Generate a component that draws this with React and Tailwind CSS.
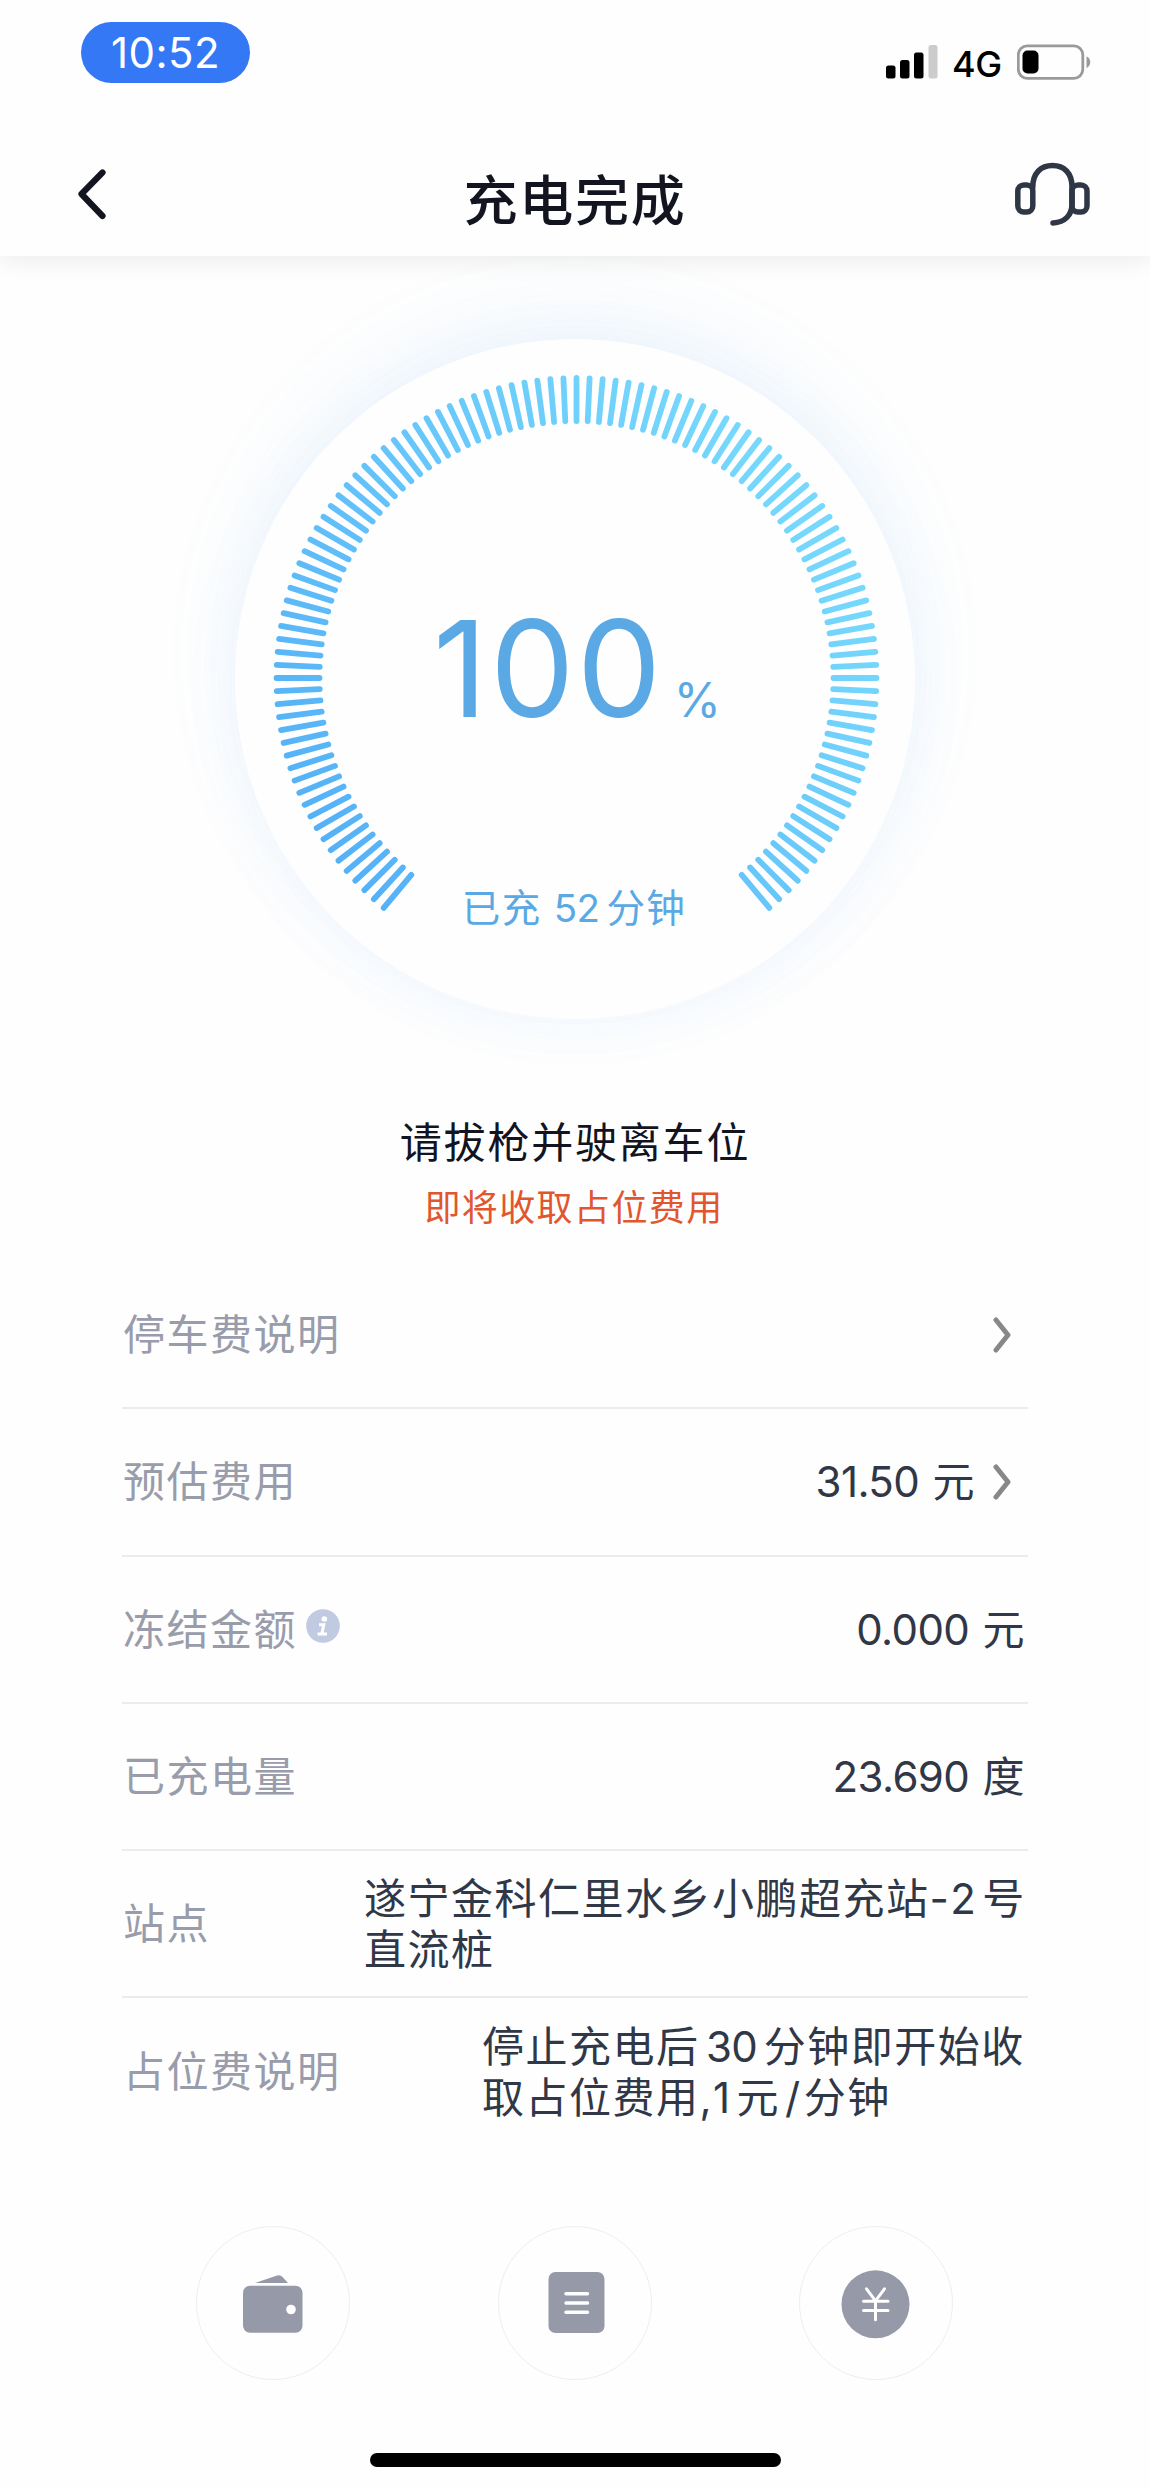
import clsx from "clsx";

// digits sit a little tighter than the Chinese text around them
function Num({ children, className }) {
  return <span className={clsx("inline-block tracking-[-0.6px]", className)}>{children}</span>;
}

const rows = [
  { label: "停车费说明", value: "", arrow: true },
  { label: "预估费用", value: <><Num>31.50</Num> 元</>, arrow: true },
  { label: "冻结金额", value: <><Num>0.000</Num> 元</>, info: true },
  { label: "已充电量", value: <><Num>23.690</Num> 度</> },
  {
    label: "站点",
    value: <>遂宁金科仁里水乡小鹏超充站-<Num className="mr-[7px]">2</Num>号<br />直流桩</>,
    width: "w-[666px] -mr-[2px]",
  },
  {
    label: "占位费说明",
    value: <>停止充电后<Num className="mx-[6.5px]">30</Num>分钟即开始收<br />取占位费用,<Num className="mr-[7px]">1</Num>元<Num className="ml-[5px] mr-[4px]">/</Num>分钟</>,
    width: "w-[546px]",
  },
];

// one tick every 2.5deg, from -140deg to 140deg
const ticks = Array.from({ length: 113 }, (_, i) => -140 + i * 2.5);

function StatusBar() {
  return (
    <div className="flex justify-between pt-[22px] pl-[81px] pr-[59px] h-[140px]">
      <div className="w-[169px] h-[61px] rounded-full bg-[#3478f6] text-white text-[42px] leading-[61px] tracking-[0.4px] text-center">
        10:52
      </div>
      <div className="flex items-center h-[36px] mt-[22px]">
        <svg className="w-[52px] h-[34px]" viewBox="0 0 52 34">
          <rect x="0" y="20.5" width="9.5" height="13" rx="2.5" />
          <rect x="14" y="15" width="9.5" height="18.5" rx="2.5" />
          <rect x="28" y="7.5" width="9.5" height="26" rx="2.5" />
          <rect x="42.5" y="0" width="9" height="33.5" rx="2.5" fill="#cccccc" />
        </svg>
        <span className="ml-[14px] w-[51px] text-[36px] leading-[36px] tracking-[-0.5px] font-medium text-black mt-[3px]">4G</span>
        <svg className="ml-[14px] w-[74px] h-[36px]" viewBox="0 0 74 36">
          <rect x="1.3" y="1.8" width="64.5" height="32.5" rx="9" fill="none" stroke="#9a9a9a" strokeWidth="2.8" />
          <rect x="5.5" y="6.5" width="16" height="23" rx="5" />
          <path d="M69.5 12.5c5 1.5 5 9.5 0 11.5z" fill="#9a9a9a" />
        </svg>
      </div>
    </div>
  );
}

function Header() {
  return (
    <header className="relative z-10 h-[256px] bg-[#fefefe] shadow-[0_4px_24px_rgba(0,0,0,0.08)]">
      <StatusBar />
      <div className="flex items-center justify-between pl-[76px] pr-[59px] h-[108px]">
        <svg className="w-[58px] h-[52px]" viewBox="0 0 58 52" fill="none">
          <path d="M26.5 4.5L5.5 26l21 22" stroke="#12141f" strokeWidth="6.2" strokeLinecap="round" strokeLinejoin="round" />
        </svg>
        <h1 className="text-[54px] leading-[60px] tracking-[1.7px] font-medium text-[#12141f] mt-[15px] ml-[1px]">充电完成</h1>
        <svg className="w-[76px] h-[66px]" viewBox="0 0 76 66" fill="none" stroke="#2f3747" strokeWidth="5.5" strokeLinecap="round">
          <rect x="2.8" y="24" width="15" height="27" rx="6" />
          <rect x="57" y="24" width="15" height="27" rx="6" />
          <path d="M17.8 26C17.8 12 26 4.5 37.5 4.5S57 12 57 26v17C57 54 50 61.5 38 62" />
        </svg>
      </div>
    </header>
  );
}

function Gauge() {
  return (
    <div className="relative mx-auto mt-[83px] w-[680px] h-[680px] rounded-full bg-[#fefefe] shadow-[0_-26px_80px_rgba(90,165,225,0.08),0_4px_60px_rgba(70,160,255,0.06)]">
      <svg className="w-full h-full" viewBox="-341.5 -339 680 680">
        <defs>
          <linearGradient id="tick" gradientUnits="userSpaceOnUse" x1="-230" y1="200" x2="230" y2="-160">
            <stop offset="0" stopColor="#54b1f7" />
            <stop offset="1" stopColor="#76d8fc" />
          </linearGradient>
        </defs>
        <g stroke="url(#tick)" strokeWidth="5.8" strokeLinecap="round">
          {ticks.map((deg) => {
            const a = (deg * Math.PI) / 180;
            return (
              <line
                key={deg}
                x1={Math.sin(a) * 257}
                y1={-Math.cos(a) * 257}
                x2={Math.sin(a) * 300 + 0.01}
                y2={-Math.cos(a) * 300 + 0.01}
              />
            );
          })}
        </g>
      </svg>
      <div className="absolute inset-0 flex flex-col items-center text-[#5aa9e4]">
        <div className="flex items-baseline mt-[249px] pl-[4px]">
          <span className="text-[134px] leading-[160px] tracking-[2.4px]">100</span>
          <span className="ml-[10px] text-[48px] leading-none">%</span>
        </div>
        <div className="mt-[135px] mr-[2px] text-[38.5px] leading-[50px] tracking-[1.4px]">
          已充 <Num className="mr-[7px]">52</Num>分钟
        </div>
      </div>
    </div>
  );
}

function Row({ row, last }) {
  return (
    <div
      className={clsx(
        "flex items-center justify-between h-[147.25px] text-[42px] leading-[51px]",
        !last && "border-b-2 border-[#ececec]"
      )}
    >
      <div className="flex items-center pl-px text-[#999caa] tracking-[1.5px] whitespace-nowrap">
        {row.label}
        {row.info && (
          <svg className="ml-[9px] -mt-[6px] w-[34px] h-[34px]" viewBox="0 0 34 34">
            <circle cx="17" cy="17" r="16.8" fill="#c0cae0" />
            <circle cx="18.3" cy="10" r="2.8" fill="#fff" />
            <path d="M13 15.8h4.8l-2 9M11.5 25h9.5" fill="none" stroke="#fff" strokeWidth="3" />
          </svg>
        )}
      </div>
      <div className="flex items-center text-[#303747]">
        <div className={clsx("tracking-[1.5px]", row.width || "whitespace-nowrap", !row.arrow && !row.width && "mr-[2px]")}>
          {row.value}
        </div>
        {row.arrow && (
          <svg className="ml-[16px] mr-[16px] w-[20px] h-[36px]" viewBox="0 0 20 36" fill="none">
            <path d="M4 3l12 15L4 33" stroke="#888888" strokeWidth="5" strokeLinecap="round" strokeLinejoin="round" />
          </svg>
        )}
      </div>
    </div>
  );
}

function RoundButton({ children }) {
  return (
    <button type="button" className="w-[154px] h-[154px] rounded-full border border-[#eeeeee] flex items-center justify-center">
      <svg className="w-[72px] h-[72px]" viewBox="0 0 72 72">
        {children}
      </svg>
    </button>
  );
}

export default function App() {
  return (
    <div className="w-[1150px] h-[2489px] overflow-hidden flex flex-col bg-[#fefefe] font-['Inter','Noto_Sans_CJK_SC',sans-serif]">
      <Header />
      <Gauge />

      {/* Notice */}
      <div className="text-center mt-[93px]">
        <p className="text-[42px] leading-[62px] tracking-[1.8px] text-[#12141f]">请拔枪并驶离车位</p>
        <p className="text-[36px] leading-[54px] tracking-[1.4px] mt-[7px] mr-[2px] text-[#e0572f]">即将收取占位费用</p>
      </div>

      {/* Details */}
      <div className="mx-[122px] mt-[27px]">
        {rows.map((row, i) => (
          <Row key={row.label} row={row} last={i === rows.length - 1} />
        ))}
      </div>

      {/* Bottom actions */}
      <div className="flex justify-between mt-[80px] pl-[196px] pr-[197px]">
        <RoundButton>
          <path d="M18 16L40 8.6q3.5-1 5.5 1.4L51 16z" fill="#9699a8" />
          <rect x="6" y="18.7" width="59.5" height="47" rx="7" fill="#9699a8" />
          <circle cx="54" cy="42.5" r="4.8" fill="#fefefe" />
        </RoundButton>
        <RoundButton>
          <rect x="9.5" y="5" width="56" height="61" rx="7" fill="#9699a8" />
          <path d="M27 26.7h21.5M27 36h21.5M27 45.3h21.5" stroke="#fefefe" strokeWidth="3.5" strokeLinecap="round" />
        </RoundButton>
        <RoundButton>
          <circle cx="35.5" cy="37.3" r="34" fill="#9699a8" />
          <path
            d="M26.5 21.8l9 12 9-12M35.5 33.8v19M23.5 34.2h24.5M23.5 43.5h24.5"
            fill="none"
            stroke="#fefefe"
            strokeWidth="3"
            strokeLinecap="round"
            strokeLinejoin="round"
          />
        </RoundButton>
      </div>

      {/* Home indicator */}
      <div className="mx-auto mt-[73px] w-[411px] h-[14px] rounded-full bg-black" />
    </div>
  );
}
